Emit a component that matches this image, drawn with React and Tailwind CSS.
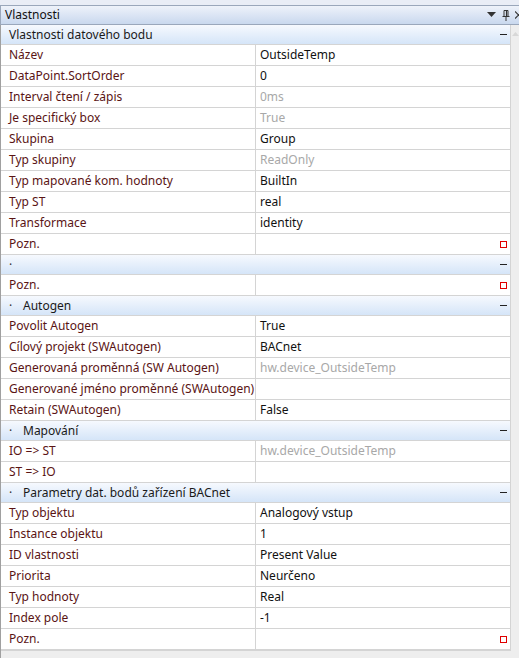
import React from 'react';

// Property grid data: sections with rows [label, value, muted?, note?]
const SECTIONS = [
  {
    title: 'Vlastnosti datového bodu',
    dot: false,
    rows: [
      { label: 'Název', value: 'OutsideTemp' },
      { label: 'DataPoint.SortOrder', value: '0' },
      { label: 'Interval čtení / zápis', value: '0ms', muted: true },
      { label: 'Je specifický box', value: 'True', muted: true },
      { label: 'Skupina', value: 'Group' },
      { label: 'Typ skupiny', value: 'ReadOnly', muted: true },
      { label: 'Typ mapované kom. hodnoty', value: 'BuiltIn' },
      { label: 'Typ ST', value: 'real' },
      { label: 'Transformace', value: 'identity' },
      { label: 'Pozn.', value: '', note: true },
    ],
  },
  {
    title: '',
    dot: true,
    rows: [{ label: 'Pozn.', value: '', note: true }],
  },
  {
    title: 'Autogen',
    dot: true,
    rows: [
      { label: 'Povolit Autogen', value: 'True' },
      { label: 'Cílový projekt (SWAutogen)', value: 'BACnet' },
      { label: 'Generovaná proměnná (SW Autogen)', value: 'hw.device_OutsideTemp', muted: true },
      { label: 'Generované jméno proměnné (SWAutogen)', value: '' },
      { label: 'Retain (SWAutogen)', value: 'False' },
    ],
  },
  {
    title: 'Mapování',
    dot: true,
    rows: [
      { label: 'IO => ST', value: 'hw.device_OutsideTemp', muted: true },
      { label: 'ST => IO', value: '' },
    ],
  },
  {
    title: 'Parametry dat. bodů zařízení BACnet',
    dot: true,
    rows: [
      { label: 'Typ objektu', value: 'Analogový vstup' },
      { label: 'Instance objektu', value: '1' },
      { label: 'ID vlastnosti', value: 'Present Value' },
      { label: 'Priorita', value: 'Neurčeno' },
      { label: 'Typ hodnoty', value: 'Real' },
      { label: 'Index pole', value: '-1' },
      { label: 'Pozn.', value: '', note: true },
    ],
  },
];

function SectionHeader({ title, dot }) {
  return (
    <div className="flex h-[20px] items-center bg-gradient-to-b from-[#f6f9fe] to-[#d5e5f8] border-b border-[#d4d4d4] pl-[8px] pr-[3px]">
      {dot && <span className="w-[14px] text-[#333] leading-none">·</span>}
      <span className="flex-1 text-[#1a1a1a]">{title}</span>
      <span className="w-[7px] h-[1.5px] bg-[#222]" />
    </div>
  );
}

function Row({ label, value, muted, note }) {
  return (
    <div className="flex h-[21px] border-b border-[#d4d4d4] bg-white">
      <div className="w-[255px] shrink-0 flex items-center pl-[8px] border-r border-[#d4d4d4] text-[#5a1414] whitespace-nowrap overflow-hidden">
        {label}
      </div>
      <div className={`flex-1 flex items-center pl-[4px] pr-[3px] whitespace-nowrap overflow-hidden ${muted ? 'text-[#a8a8a8]' : 'text-[#111]'}`}>
        <span className="flex-1">{value}</span>
        {note && <span className="w-[7px] h-[7px] border-[1.5px] border-[#e00000]" />}
      </div>
    </div>
  );
}

export default function App() {
  return (
    <div
      className="w-[519px] h-[658px] overflow-hidden bg-[#e9edf6] text-[12px]"
      style={{ fontFamily: '"Segoe UI", "Noto Sans", "Open Sans", sans-serif' }}
    >
      <div className="h-[5px]" />
      <div className="flex h-[20px] items-center border-t border-b border-[#9aa7bb] border-l bg-gradient-to-b from-[#eef2fa] to-[#c9d8ee] pl-[4px]">
        <span className="flex-1 text-[#111]">Vlastnosti</span>
        <svg width="9" height="6" viewBox="0 0 9 6" className="mr-[6px]">
          <path d="M0 0 H9 L4.5 5 Z" fill="#333" />
        </svg>
        <svg width="8" height="11" viewBox="0 0 8 11" className="mr-[5px]">
          <path d="M2 0.5 V6.5 M6 0.5 V6.5 M2 0.5 H6 M0.5 6.5 H7.5 M4 6.5 V11" stroke="#333" strokeWidth="1" fill="none" />
          <path d="M4.5 1 V6" stroke="#333" strokeWidth="1.2" />
        </svg>
        <svg width="4" height="8" viewBox="0 0 4 8" className="shrink-0">
          <path d="M0 0.5 L7 7.5 M7 0.5 L0 7.5" stroke="#333" strokeWidth="1.2" />
        </svg>
      </div>
      <div className="flex h-[633px]">
        <div className="w-[511px] shrink-0 flex flex-col border-l border-[#a0a0a0] bg-[#eeeeee]">
          <div className="border-r border-b border-[#d4d4d4]">
            {SECTIONS.map((s, i) => (
              <div key={i}>
                <SectionHeader title={s.title} dot={s.dot} />
                {s.rows.map((r, j) => (
                  <Row key={j} {...r} />
                ))}
              </div>
            ))}
          </div>
        </div>
        <div className="flex-1 bg-[#eeeeee] flex justify-center pt-[7px]">
          <svg width="7" height="4" viewBox="0 0 7 4">
            <path d="M0 4 L3.5 0 L7 4 Z" fill="#d8d8d8" />
          </svg>
        </div>
      </div>
    </div>
  );
}
